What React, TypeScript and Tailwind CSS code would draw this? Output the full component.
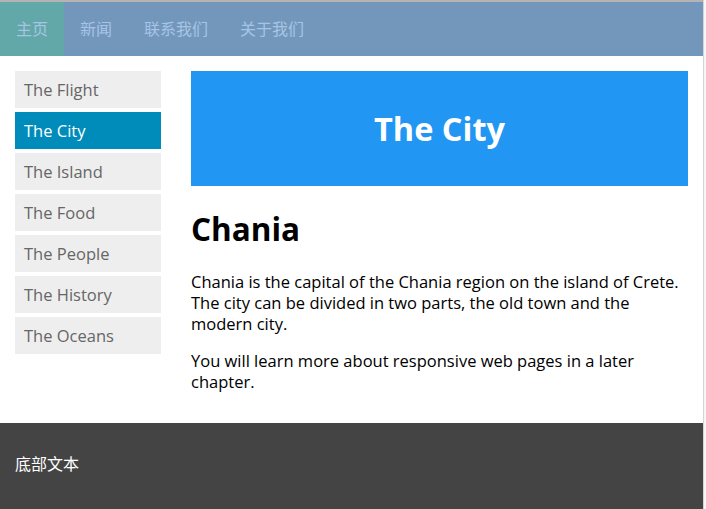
import React from "react";

const navItems = ["主页", "新闻", "联系我们", "关于我们"];

const menuItems = [
  "The Flight",
  "The City",
  "The Island",
  "The Food",
  "The People",
  "The History",
  "The Oceans",
];

const App: React.FC = () => {
  return (
    <div className="flex min-h-[509px] w-[706px] font-['Open_Sans','Noto_Sans_CJK_SC',sans-serif] text-black">
      <div className="flex w-[703px] flex-col border-t-2 border-[#b4b4b4] bg-white">
        {/* top nav */}
        <ul className="flex h-[54px] bg-[#7397bb] text-[16px] text-[#a6c4e4]">
          {navItems.map((item, i) => (
            <li
              key={item}
              className={
                i === 0
                  ? "flex items-center bg-[#62a8a8] px-4"
                  : "flex items-center px-4"
              }
            >
              {item}
            </li>
          ))}
        </ul>

        {/* body */}
        <div className="flex px-[15px] pt-[15px]">
          <ul className="flex w-[146px] shrink-0 flex-col gap-1">
            {menuItems.map((item) => (
              <li
                key={item}
                className={
                  item === "The City"
                    ? "flex h-[37px] items-center bg-[#008cba] pt-[2px] pl-[9px] text-[16.5px] text-white"
                    : "flex h-[37px] items-center bg-[#eeeeee] pt-[2px] pl-[9px] text-[16.5px] text-[#666666]"
                }
              >
                {item}
              </li>
            ))}
          </ul>

          <div className="ml-[30px] flex w-[497px] flex-col pb-[15px]">
            <div className="flex h-[115px] items-center justify-center bg-[#2196f3] pt-[2px]">
              <h1 className="text-[32.5px] font-bold text-white">The City</h1>
            </div>
            <h2 className="mt-[21px] h-[43px] text-[31.5px] leading-[43px] font-bold">
              Chania
            </h2>
            <p className="mt-[21px] text-[16.5px] leading-[21px]">
              Chania is the capital of the Chania region on the island of
              Crete. The city can be divided in two parts, the old town and the
              modern city.
            </p>
            <p className="mt-4 mb-4 text-[16.5px] leading-[21px]">
              You will learn more about responsive web pages in a later
              chapter.
            </p>
          </div>
        </div>

        {/* footer */}
        <div className="flex-1 bg-[#444444] px-[15px] pt-[31px] text-[16px] leading-[21px] text-white">
          底部文本
        </div>
      </div>
      <div className="w-[3px] border-l border-[#d4d4d4] bg-[#f6f6f6]" />
    </div>
  );
};

export default App;
